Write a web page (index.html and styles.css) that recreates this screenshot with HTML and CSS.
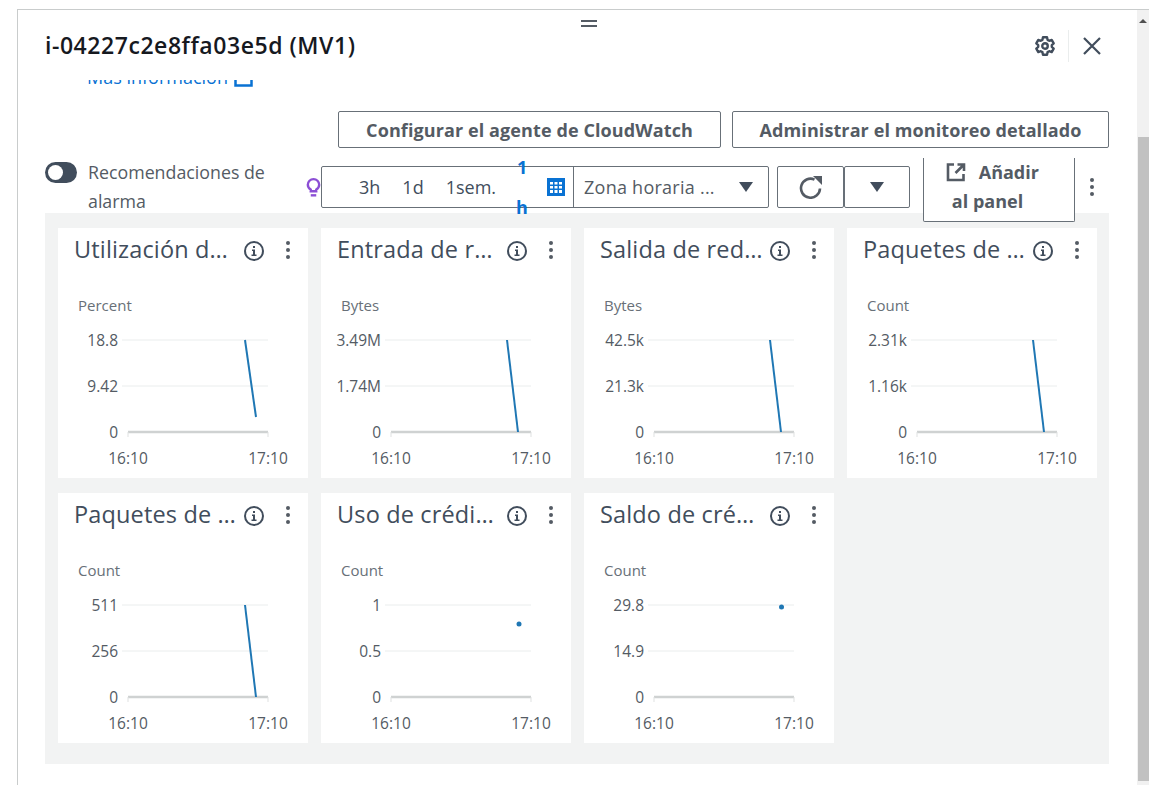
FILE: index.html
```html
<!DOCTYPE html>
<html>
<head>
<title>i-04227c2e8ffa03e5d (MV1)</title>
<link rel="stylesheet" href="styles.css">
</head>
<body>
<div class="window">
  <div class="main">
    <div class="drag-handle"></div>
    <div class="header">
      <h2>i-04227c2e8ffa03e5d (MV1)</h2>
      <div class="header-icons">
        <svg class="gear" width="22" height="22" viewBox="0 0 24 24" fill="none" stroke="#414d5c" stroke-width="2.600" stroke-linejoin="round"><path d="M9.800 2.500h4.400l.6 2.800 1.800 1 2.700-.9 2.200 3.800-2.100 1.900v1.800l2.100 1.900-2.200 3.800-2.700-.9-1.800 1-.6 2.800H9.800l-.6-2.800-1.800-1-2.700.9-2.200-3.800 2.100-1.900v-1.800L2.500 9.200l2.200-3.800 2.700.9 1.800-1z"/><circle cx="12" cy="12" r="3"/></svg>
        <span class="divider"></span>
        <svg width="22" height="22" viewBox="0 0 22 22" stroke="#414d5c" stroke-width="2.200"><path d="M3 3l16 16M19 3L3 19"/></svg>
      </div>
    </div>
    <div class="content">
      <div class="more-info">
        <a>Más información</a>
        <svg width="19" height="18" viewBox="0 0 19 18" fill="none" stroke="#0972d3" stroke-width="2.500"><rect x="1.500" y="1.500" width="16" height="15"/></svg>
      </div>
      <div class="actions">
        <button class="btn btn-agent">Configurar el agente de CloudWatch</button>
        <button class="btn btn-monitor">Administrar el monitoreo detallado</button>
      </div>
      <div class="toolbar">
        <div class="toggle"><span class="knob"></span></div>
        <div class="toggle-label">Recomendaciones de alarma</div>
        <svg class="bulb" width="15" height="22" viewBox="0 0 16 24" fill="none" stroke="#8c4fd5" stroke-width="2.600"><path d="M5 15.500v-1.800C3 12.500 1.800 10.700 1.800 8.500a6.200 6.200 0 0 1 12.400 0c0 2.200-1.200 4-3.200 5.200v1.800z"/><path d="M5 20h6"/></svg>
        <div class="range">
          <div class="range-times">
            <span class="t-3h">3h</span>
            <span class="t-1d">1d</span>
            <span class="t-1w">1sem.</span>
            <span class="t-1h">1 h</span>
            <svg width="18" height="18" viewBox="0 0 18 18"><rect width="18" height="18" fill="#0972d3"/><path d="M3 4h3v2.500H3zM7.500 4h3v2.500h-3zM12 4h3v2.500h-3zM3 8h3v2.500H3zM7.500 8h3v2.500h-3zM12 8h3v2.500h-3zM3 12h3v3H3zM7.500 12h3v3h-3zM12 12h3v3h-3z" fill="#fff"/></svg>
          </div>
          <div class="range-zone">
            <span>Zona horaria ...</span>
            <i class="caret"></i>
          </div>
        </div>
        <div class="refresh">
          <svg width="24" height="24" viewBox="0 0 24 24" fill="none" stroke="#545b64" stroke-width="2.600"><path d="M21 13.500A9.500 9.500 0 1 1 15.500 4.600"/><path d="M14 1h9v9z" fill="#545b64" stroke="none"/></svg>
        </div>
        <div class="refresh-more"><i class="caret"></i></div>
        <button class="add-panel">
          <svg width="20" height="20" viewBox="0 0 20 20" fill="none" stroke="#545b64" stroke-width="2.600"><path d="M8 2.500H2v15.500h15.500V12"/><path d="M11.500 2.500h6.500v6.500M17.500 3l-8 8"/></svg>
          <span>Añadir</span><br>
          <span class="add-line">al panel</span>
        </button>
        <div class="kebab toolbar-kebab"><i></i><i></i><i></i></div>
      </div>

      <div class="grid">
        <div class="card">
          <div class="card-head">
            <div class="card-title">Utilización de CPU (porcentaje)</div>
            <svg class="info" width="22" height="22" viewBox="0 0 22 22"><circle cx="11" cy="11" r="9" fill="none" stroke="#414d5c" stroke-width="2"/><path d="M9 9.500h3v5h1.500v1.500h-5v-1.500H10v-3.500H9zM10 6h2v2h-2z" fill="#414d5c"/></svg>
            <div class="kebab"><i></i><i></i><i></i></div>
          </div>
          <svg class="chart" width="250" height="200" viewBox="0 50 250 200">
            <text class="unit" x="20" y="83">Percent</text>
            <path class="grid-line" d="M64 112H210M64 158H210"/>
            <path class="axis" d="M70 204H210"/>
            <path class="tick" d="M70 204v5M210 204v5"/>
            <text class="ylabel" x="60" y="117">18.8</text>
            <text class="ylabel" x="60" y="163">9.42</text>
            <text class="ylabel" x="60" y="209">0</text>
            <text class="xlabel" x="70" y="235">16:10</text>
            <text class="xlabel" x="210" y="235">17:10</text>
            <path class="series" d="M187 112L198 189"/>
          </svg>
        </div>
        <div class="card">
          <div class="card-head">
            <div class="card-title">Entrada de red (bytes)</div>
            <svg class="info" width="22" height="22" viewBox="0 0 22 22"><circle cx="11" cy="11" r="9" fill="none" stroke="#414d5c" stroke-width="2"/><path d="M9 9.500h3v5h1.500v1.500h-5v-1.500H10v-3.500H9zM10 6h2v2h-2z" fill="#414d5c"/></svg>
            <div class="kebab"><i></i><i></i><i></i></div>
          </div>
          <svg class="chart" width="250" height="200" viewBox="0 50 250 200">
            <text class="unit" x="20" y="83">Bytes</text>
            <path class="grid-line" d="M64 112H210M64 158H210"/>
            <path class="axis" d="M70 204H210"/>
            <path class="tick" d="M70 204v5M210 204v5"/>
            <text class="ylabel" x="60" y="117">3.49M</text>
            <text class="ylabel" x="60" y="163">1.74M</text>
            <text class="ylabel" x="60" y="209">0</text>
            <text class="xlabel" x="70" y="235">16:10</text>
            <text class="xlabel" x="210" y="235">17:10</text>
            <path class="series" d="M186 112L197 204"/>
          </svg>
        </div>
        <div class="card">
          <div class="card-head">
            <div class="card-title">Salida de red (bytes)</div>
            <svg class="info" width="22" height="22" viewBox="0 0 22 22"><circle cx="11" cy="11" r="9" fill="none" stroke="#414d5c" stroke-width="2"/><path d="M9 9.500h3v5h1.500v1.500h-5v-1.500H10v-3.500H9zM10 6h2v2h-2z" fill="#414d5c"/></svg>
            <div class="kebab"><i></i><i></i><i></i></div>
          </div>
          <svg class="chart" width="250" height="200" viewBox="0 50 250 200">
            <text class="unit" x="20" y="83">Bytes</text>
            <path class="grid-line" d="M64 112H210M64 158H210"/>
            <path class="axis" d="M70 204H210"/>
            <path class="tick" d="M70 204v5M210 204v5"/>
            <text class="ylabel" x="60" y="117">42.5k</text>
            <text class="ylabel" x="60" y="163">21.3k</text>
            <text class="ylabel" x="60" y="209">0</text>
            <text class="xlabel" x="70" y="235">16:10</text>
            <text class="xlabel" x="210" y="235">17:10</text>
            <path class="series" d="M186 112L197 204"/>
          </svg>
        </div>
        <div class="card">
          <div class="card-head">
            <div class="card-title">Paquetes de red de entrada</div>
            <svg class="info" width="22" height="22" viewBox="0 0 22 22"><circle cx="11" cy="11" r="9" fill="none" stroke="#414d5c" stroke-width="2"/><path d="M9 9.500h3v5h1.500v1.500h-5v-1.500H10v-3.500H9zM10 6h2v2h-2z" fill="#414d5c"/></svg>
            <div class="kebab"><i></i><i></i><i></i></div>
          </div>
          <svg class="chart" width="250" height="200" viewBox="0 50 250 200">
            <text class="unit" x="20" y="83">Count</text>
            <path class="grid-line" d="M64 112H210M64 158H210"/>
            <path class="axis" d="M70 204H210"/>
            <path class="tick" d="M70 204v5M210 204v5"/>
            <text class="ylabel" x="60" y="117">2.31k</text>
            <text class="ylabel" x="60" y="163">1.16k</text>
            <text class="ylabel" x="60" y="209">0</text>
            <text class="xlabel" x="70" y="235">16:10</text>
            <text class="xlabel" x="210" y="235">17:10</text>
            <path class="series" d="M186 112L197 204"/>
          </svg>
        </div>
        <div class="card">
          <div class="card-head">
            <div class="card-title">Paquetes de red de salida</div>
            <svg class="info" width="22" height="22" viewBox="0 0 22 22"><circle cx="11" cy="11" r="9" fill="none" stroke="#414d5c" stroke-width="2"/><path d="M9 9.500h3v5h1.500v1.500h-5v-1.500H10v-3.500H9zM10 6h2v2h-2z" fill="#414d5c"/></svg>
            <div class="kebab"><i></i><i></i><i></i></div>
          </div>
          <svg class="chart" width="250" height="200" viewBox="0 50 250 200">
            <text class="unit" x="20" y="83">Count</text>
            <path class="grid-line" d="M64 112H210M64 158H210"/>
            <path class="axis" d="M70 204H210"/>
            <path class="tick" d="M70 204v5M210 204v5"/>
            <text class="ylabel" x="60" y="117">511</text>
            <text class="ylabel" x="60" y="163">256</text>
            <text class="ylabel" x="60" y="209">0</text>
            <text class="xlabel" x="70" y="235">16:10</text>
            <text class="xlabel" x="210" y="235">17:10</text>
            <path class="series" d="M187 112L198 204"/>
          </svg>
        </div>
        <div class="card">
          <div class="card-head">
            <div class="card-title">Uso de créditos de CPU</div>
            <svg class="info" width="22" height="22" viewBox="0 0 22 22"><circle cx="11" cy="11" r="9" fill="none" stroke="#414d5c" stroke-width="2"/><path d="M9 9.500h3v5h1.500v1.500h-5v-1.500H10v-3.500H9zM10 6h2v2h-2z" fill="#414d5c"/></svg>
            <div class="kebab"><i></i><i></i><i></i></div>
          </div>
          <svg class="chart" width="250" height="200" viewBox="0 50 250 200">
            <text class="unit" x="20" y="83">Count</text>
            <path class="grid-line" d="M64 112H210M64 158H210"/>
            <path class="axis" d="M70 204H210"/>
            <path class="tick" d="M70 204v5M210 204v5"/>
            <text class="ylabel" x="60" y="117">1</text>
            <text class="ylabel" x="60" y="163">0.5</text>
            <text class="ylabel" x="60" y="209">0</text>
            <text class="xlabel" x="70" y="235">16:10</text>
            <text class="xlabel" x="210" y="235">17:10</text>
            <circle class="point" cx="198" cy="131" r="2.500"/>
          </svg>
        </div>
        <div class="card">
          <div class="card-head">
            <div class="card-title">Saldo de créditos de CPU</div>
            <svg class="info" width="22" height="22" viewBox="0 0 22 22"><circle cx="11" cy="11" r="9" fill="none" stroke="#414d5c" stroke-width="2"/><path d="M9 9.500h3v5h1.500v1.500h-5v-1.500H10v-3.500H9zM10 6h2v2h-2z" fill="#414d5c"/></svg>
            <div class="kebab"><i></i><i></i><i></i></div>
          </div>
          <svg class="chart" width="250" height="200" viewBox="0 50 250 200">
            <text class="unit" x="20" y="83">Count</text>
            <path class="grid-line" d="M64 112H210M64 158H210"/>
            <path class="axis" d="M70 204H210"/>
            <path class="tick" d="M70 204v5M210 204v5"/>
            <text class="ylabel" x="60" y="117">29.8</text>
            <text class="ylabel" x="60" y="163">14.9</text>
            <text class="ylabel" x="60" y="209">0</text>
            <text class="xlabel" x="70" y="235">16:10</text>
            <text class="xlabel" x="210" y="235">17:10</text>
            <circle class="point" cx="197.500" cy="114" r="2.500"/>
          </svg>
        </div>
      </div>
    </div>
  </div>
  <div class="scrollbar">
    <i class="scroll-arrow"></i>
    <div class="scroll-thumb"></div>
  </div>
</div>
</body>
</html>
```

FILE: styles.css
```css
body {
    margin: 0;
    padding: 0;
    background-color: #fff;
    font-family: "Open Sans", "Noto Sans", sans-serif;
    color: #545b64;
    overflow: hidden;
}

.window {
    display: flex;
    width: 1131px;
    height: 775px;
    margin: 9px 0 0 17px;
    border-top: 1px solid #c9cccc;
    border-left: 1px solid #c9cccc;
}

.main {
    position: relative;
    flex: 1;
    min-width: 0;
    display: flex;
    flex-direction: column;
}

.drag-handle {
    position: absolute;
    z-index: 2;
    left: 563px;
    top: 10px;
    width: 16px;
    height: 3px;
    border-top: 2px solid #545b64;
    border-bottom: 2px solid #545b64;
}

.header {
    position: relative;
    z-index: 1;
    flex: none;
    height: 70px;
    padding: 0 34px 0 27px;
    box-sizing: border-box;
    display: flex;
    align-items: center;
    justify-content: space-between;
    background-color: #fff;
}

.header h2 {
    margin: 0;
    font-size: 23px;
    font-weight: 600;
    letter-spacing: 0.55px;
    color: #16191f;
}

.header-icons {
    display: flex;
    align-items: center;
    margin-top: 2px;
}

.divider {
    width: 1px;
    height: 32px;
    margin: 0 12px;
    background-color: #eaeded;
}

.content {
    flex: 1;
    overflow: hidden;
    padding: 0 28px 0 27px;
}

.more-info {
    display: flex;
    align-items: flex-end;
    gap: 6px;
    height: 22px;
    margin: -15px 0 0 42px;
    color: #0972d3;
    font-size: 18px;
    line-height: 22px;
}

.more-info a {
    position: relative;
    top: 1px;
}

.actions {
    display: flex;
    justify-content: flex-end;
    gap: 11px;
    margin-top: 24px;
}

.btn {
    height: 37px;
    padding: 0;
    background-color: #fff;
    border: 1px solid #687078;
    border-radius: 2px;
    color: #545b64;
    font-family: inherit;
    font-size: 18px;
    font-weight: 700;
    letter-spacing: 0.1px;
}

.btn-agent {
    width: 383px;
}

.btn-monitor {
    width: 377px;
}

.toolbar {
    position: relative;
    z-index: 1;
    display: flex;
    align-items: flex-start;
    height: 55px;
    margin-top: 10px;
}

.toggle {
    flex: none;
    width: 32px;
    height: 21px;
    margin-top: 4px;
    background-color: #414d5c;
    border-radius: 11px;
}

.knob {
    display: block;
    width: 15px;
    height: 15px;
    margin: 3px;
    background-color: #fff;
    border-radius: 50%;
}

.toggle-label {
    flex: none;
    width: 217px;
    margin-left: 11px;
    font-size: 17.800px;
    line-height: 29px;
    padding-right: 30px;
    box-sizing: border-box;
    color: #545b64;
}

.bulb {
    flex: none;
    margin: 19px 0 0 1px;
}

.range {
    flex: none;
    display: flex;
    width: 448px;
    height: 42px;
    margin: 8px 0 0 0;
    box-sizing: border-box;
    border: 1px solid #687078;
    border-radius: 2px;
    background-color: #fff;
}

.range-times {
    flex: none;
    display: flex;
    align-items: center;
    width: 252px;
    box-sizing: border-box;
    border-right: 1px solid #687078;
    font-size: 18px;
    color: #414d5c;
}

.t-3h {
    margin-left: 37px;
}

.t-1d {
    margin-left: 22px;
}

.t-1w {
    margin-left: 22px;
}

.t-1h {
    width: 12px;
    margin: 0 19px 0 20px;
    color: #0972d3;
    font-weight: 700;
    line-height: 40px;
    text-align: center;
}

.range-zone {
    flex: 1;
    display: flex;
    align-items: center;
    justify-content: space-between;
    padding: 0 15px 0 10px;
    font-size: 18px;
    letter-spacing: 0.25px;
}

.caret {
    display: block;
    width: 0;
    height: 0;
    border-left: 7px solid transparent;
    border-right: 7px solid transparent;
    border-top: 10px solid #414d5c;
}

.refresh, .refresh-more {
    flex: none;
    display: flex;
    align-items: center;
    justify-content: center;
    height: 42px;
    box-sizing: border-box;
    margin-top: 8px;
    border: 1px solid #687078;
    border-radius: 2px;
    background-color: #fff;
}

.refresh {
    width: 67px;
    margin-left: 8px;
}

.refresh-more {
    width: 66px;
}

.add-panel {
    flex: none;
    display: block;
    width: 152px;
    height: 64px;
    margin-left: 13px;
    padding: 0 13px 6px 0;
    background-color: #fff;
    border: 1px solid #687078;
    border-top: none;
    border-radius: 0 0 2px 2px;
    color: #545b64;
    font-family: inherit;
    font-size: 18px;
    font-weight: 700;
    line-height: 29px;
    text-align: center;
}

.add-panel svg {
    vertical-align: -3px;
    margin-right: 8px;
}

.add-line {
    display: inline-block;
    margin-right: 10px;
}

.kebab {
    display: flex;
    flex-direction: column;
    align-items: center;
    gap: 3px;
    width: 4px;
}

.kebab i {
    display: block;
    width: 4px;
    height: 4px;
    background-color: #545b64;
    border-radius: 50%;
}

.toolbar-kebab {
    margin: 20px 0 0 15px;
}

.grid {
    display: grid;
    grid-template-columns: repeat(4, 250px);
    gap: 15px 13px;
    padding: 15px 13px 21px;
    background-color: #f2f3f3;
    width: 1064px;
    box-sizing: border-box;
}

.card {
    height: 250px;
    background-color: #fff;
}

.card-head {
    display: flex;
    align-items: center;
    height: 50px;
    padding: 0 18px 6px 16px;
    box-sizing: border-box;
}

.card-title {
    width: 163px;
    flex: none;
    margin-bottom: 2px;
    overflow: hidden;
    white-space: nowrap;
    text-overflow: ellipsis;
    font-size: 23.500px;
    letter-spacing: 0.15px;
    color: #414d5c;
}

.info {
    flex: none;
    margin-left: 6px;
    margin-top: 1px;
}

.card-head .kebab {
    margin-left: 21px;
}

.chart {
    display: block;
}

.chart text {
    font-family: "Open Sans", "Noto Sans", sans-serif;
    font-size: 15.500px;
    fill: #545b64;
}

.chart .unit {
    font-size: 15px;
    fill: #687078;
}

.chart .ylabel {
    text-anchor: end;
    transform: translateY(1px);
}

.chart .xlabel {
    text-anchor: middle;
    transform: translateY(1px);
}

.grid-line {
    stroke: #eaeded;
    stroke-width: 1;
    fill: none;
}

.axis {
    stroke: #cfd2d2;
    stroke-width: 2.500;
    fill: none;
}

.tick {
    stroke: #dfe1e1;
    stroke-width: 1;
    fill: none;
}

.series {
    stroke: #1f77b4;
    stroke-width: 2;
    fill: none;
}

.point {
    fill: #1f77b4;
}

.scrollbar {
    flex: none;
    position: relative;
    width: 12px;
    background-color: #f1f1f1;
}

.scroll-arrow {
    display: block;
    width: 0;
    height: 0;
    margin: 9px auto 0;
    border-left: 4px solid transparent;
    border-right: 4px solid transparent;
    border-bottom: 4px solid #505050;
}

.scroll-thumb {
    width: 11px;
    height: 644px;
    margin: 114px 0 0 1px;
    background-color: #c1c1c1;
}
```
